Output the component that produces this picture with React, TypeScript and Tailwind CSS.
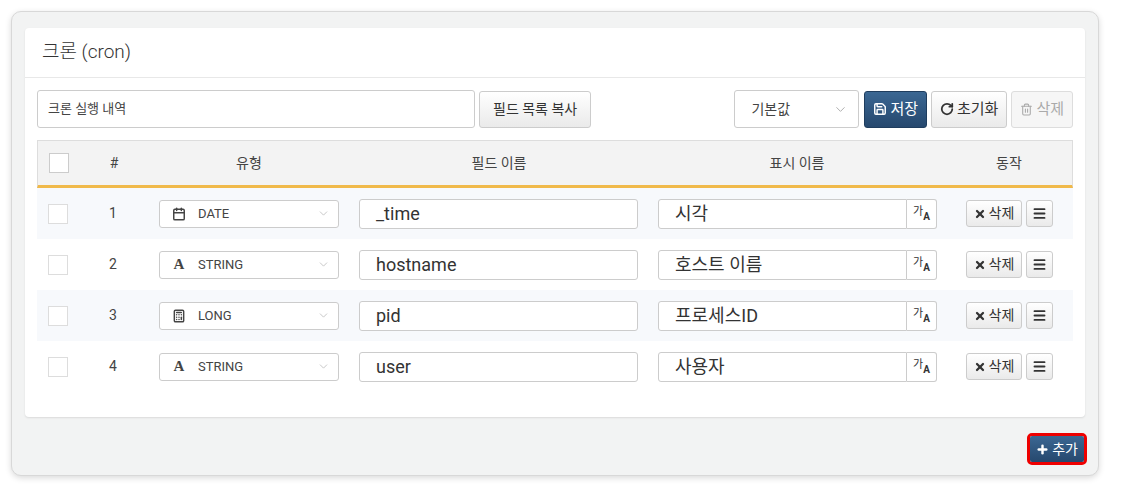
import { ChevronDown, Calendar, Calculator, Save, RotateCw, Trash2, X, Menu, Plus } from "lucide-react"

const font = { fontFamily: "Roboto, 'Noto Sans CJK KR', sans-serif" }

const rows = [
	{ n: 1, type: "DATE", field: "_time", label: "시각" },
	{ n: 2, type: "STRING", field: "hostname", label: "호스트 이름" },
	{ n: 3, type: "LONG", field: "pid", label: "프로세스ID" },
	{ n: 4, type: "STRING", field: "user", label: "사용자" },
]

function TypeIcon({ type }: { type: string }) {
	if (type === "DATE") return <Calendar className="w-[14px] h-[14px] text-[#444]" strokeWidth={2.5} />
	if (type === "LONG") return <Calculator className="w-[14px] h-[14px] text-[#444]" strokeWidth={2.5} />
	return <span className="text-[15px] font-bold text-[#444] leading-none" style={{ fontFamily: "'Liberation Serif', serif" }}>A</span>
}

// grid columns shared by header and rows
const cols = "grid grid-cols-[42px_68px_202px_298px_298px_1fr] items-center"

export default function App() {
	return (
		<div className="w-[1122px] h-[499px] bg-white pt-[11px] pl-[11px]" style={font}>
			<div className="w-[1088px] h-[465px] bg-[#f2f3f3] border border-[#d8d8d8] rounded-[10px] shadow-[0_2px_6px_rgba(0,0,0,0.15)] pt-[16px] px-[13px] flex flex-col">
				<div className="bg-white rounded-[4px] h-[389px] shadow-[0_1px_2px_rgba(0,0,0,0.1)]">
					<div className="h-[50px] border-b border-[#e8e8e8] flex items-center px-[17px] text-[19px] font-light text-[#333]">크론 (cron)</div>
					<div className="px-[12px] pt-[12px]">
						<div className="flex items-center h-[38px]">
							<div className="w-[438px] h-[38px] border border-[#ccc] rounded-[3px] flex items-center px-[10px] text-[13px] text-[#444]">크론 실행 내역</div>
							<button className="ml-[4px] h-[37px] px-[13px] border border-[#ccc] rounded-[3px] bg-gradient-to-b from-white to-[#eaeaea] text-[14px] text-[#333]">필드 목록 복사</button>
							<div className="flex-1" />
							<div className="w-[125px] h-[38px] border border-[#ccc] rounded-[3px] flex items-center justify-between pl-[16px] pr-[10px] text-[14px] text-[#444]">
								기본값<ChevronDown className="w-[15px] h-[15px] text-[#aaa]" strokeWidth={1.5} />
							</div>
							<button className="ml-[5px] h-[37px] px-[8px] rounded-[3px] bg-gradient-to-b from-[#3b6793] to-[#26486e] border border-[#1f3d5e] text-white text-[15px] flex items-center gap-[3px]">
								<Save className="w-[14px] h-[14px]" strokeWidth={2.5} />저장
							</button>
							<button className="ml-[4px] h-[37px] px-[8px] rounded-[3px] bg-gradient-to-b from-white to-[#eaeaea] border border-[#ccc] text-[#333] text-[15px] flex items-center gap-[3px]">
								<RotateCw className="w-[14px] h-[14px]" strokeWidth={3} />초기화
							</button>
							<button className="ml-[4px] h-[37px] px-[8px] rounded-[3px] bg-[#f6f6f6] border border-[#ddd] text-[#aaa] text-[15px] flex items-center gap-[3px]">
								<Trash2 className="w-[13px] h-[13px]" strokeWidth={2} />삭제
							</button>
						</div>
						<div className="mt-[12px]">
							<div className={`${cols} h-[48px] bg-[#f3f3f3] border border-[#ddd] border-b-[3px] border-b-[#f0b94a] text-[14px] text-[#444]`}>
								<div className="flex justify-center"><div className="w-[20px] h-[20px] border border-[#ccc] bg-white" /></div>
								<div className="text-center">#</div>
								<div className="text-center">유형</div>
								<div className="text-center">필드 이름</div>
								<div className="text-center">표시 이름</div>
								<div className="text-center">동작</div>
							</div>
							{rows.map((r) => (
								<div key={r.n} className={`${cols} h-[51px] ${r.n % 2 ? "bg-[#f7f9fc]" : "bg-white"}`}>
									<div className="flex justify-center"><div className="w-[20px] h-[20px] border border-[#ddd] bg-white" /></div>
									<div className="text-center text-[14px] text-[#444]">{r.n}</div>
									<div className="pl-[12px]">
										<div className="w-[180px] h-[28px] border border-[#ccc] rounded-[3px] bg-white flex items-center pl-[12px] pr-[8px] text-[13px] text-[#444]">
											<span className="w-[14px] flex justify-center"><TypeIcon type={r.type} /></span>
											<span className="ml-[12px] flex-1">{r.type}</span>
											<ChevronDown className="w-[13px] h-[13px] text-[#bbb]" strokeWidth={1.5} />
										</div>
									</div>
									<div className="pl-[10px]">
										<div className="w-[279px] h-[30px] border border-[#ccc] rounded-[3px] bg-white flex items-center px-[16px] text-[18px] text-[#333]">{r.field}</div>
									</div>
									<div className="pl-[11px] flex">
										<div className="w-[249px] h-[30px] border border-[#ccc] rounded-l-[3px] bg-white flex items-center px-[16px] text-[18px] text-[#333]">{r.label}</div>
										<div className="w-[30px] h-[30px] border border-l-0 border-[#ccc] rounded-r-[3px] bg-white flex items-center justify-center text-[#333]">
											<span className="text-[11px] leading-none -mt-[4px]">가</span><span className="text-[10px] font-bold leading-none mt-[6px]">A</span>
										</div>
									</div>
									<div className="flex items-center pl-[21px] gap-[4px]">
										<button className="h-[27px] w-[56px] border border-[#ccc] rounded-[3px] bg-gradient-to-b from-white to-[#eaeaea] text-[14px] text-[#333] flex items-center justify-center gap-[3px]">
											<X className="w-[12px] h-[12px]" strokeWidth={4.5} />삭제
										</button>
										<button className="h-[27px] w-[27px] border border-[#ccc] rounded-[3px] bg-gradient-to-b from-white to-[#eaeaea] flex items-center justify-center">
											<Menu className="w-[15px] h-[15px] text-[#333]" strokeWidth={3} />
										</button>
									</div>
								</div>
							))}
						</div>
					</div>
				</div>
				<div className="flex justify-end mt-[16px] -mr-[2px]">
					<div className="border-[3px] border-[#e00] rounded-[5px]">
						<button className="h-[26px] px-[6px] bg-gradient-to-b from-[#3b6793] to-[#26486e] text-white text-[14px] flex items-center gap-[3px] rounded-[2px]">
							<Plus className="w-[13px] h-[13px]" strokeWidth={4.5} />추가
						</button>
					</div>
				</div>
			</div>
		</div>
	)
}
